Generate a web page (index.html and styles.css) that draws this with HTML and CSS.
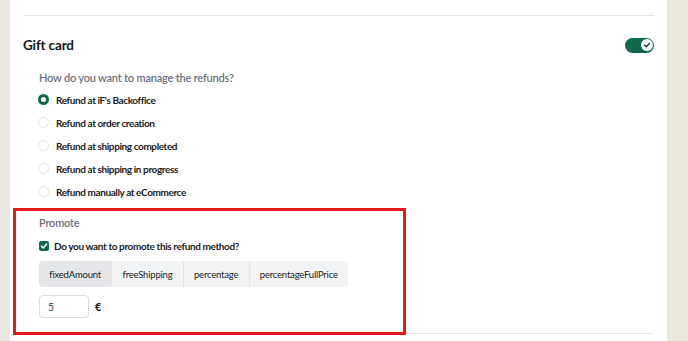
FILE: index.html
```html
<!DOCTYPE html>
<html lang="en">
<head>
<meta charset="utf-8">
<title>Gift card</title>
<link rel="stylesheet" href="styles.css">
</head>
<body>
<div class="page">
  <div class="gutter"></div>
  <main class="panel">
    <div class="divider"></div>
    <div class="card-header">
      <h2 class="card-title">Gift card</h2>
      <span class="toggle"><span class="knob"><svg viewBox="0 0 12 12" width="12" height="12"><path d="M3.6 6.2l1.6 1.6 3.2-3.4" fill="none" stroke="#1b3a2c" stroke-width="1.4" stroke-linecap="round" stroke-linejoin="round"/></svg></span></span>
    </div>
    <div class="section">
      <div class="question">How do you want to manage the refunds?</div>
      <div class="radio-list">
        <label class="radio-row"><span class="radio checked"></span>Refund at iF's Backoffice</label>
        <label class="radio-row"><span class="radio"></span>Refund at order creation</label>
        <label class="radio-row"><span class="radio"></span>Refund at shipping completed</label>
        <label class="radio-row"><span class="radio"></span>Refund at shipping in progress</label>
        <label class="radio-row"><span class="radio"></span>Refund manually at eCommerce</label>
      </div>
    </div>
    <div class="promote">
      <div class="question">Promote</div>
      <label class="check-row"><span class="checkbox"><svg viewBox="0 0 10 10" width="10" height="10"><path d="M2.4 5.2l1.8 1.7 3.5-3.8" fill="none" stroke="#fff" stroke-width="1.5" stroke-linecap="round" stroke-linejoin="round"/></svg></span>Do you want to promote this refund method?</label>
      <div class="segmented">
        <button class="seg active">fixedAmount</button>
        <button class="seg">freeShipping</button>
        <button class="seg">percentage</button>
        <button class="seg">percentageFullPrice</button>
      </div>
      <div class="amount-row">
        <input class="amount" type="text" value="5">
        <span class="currency">€</span>
      </div>
    </div>
    <div class="divider bottom"></div>
  </main>
  <div class="gutter-right"></div>
</div>
</body>
</html>
```
FILE: styles.css
```css
html, body {
  margin: 0;
  padding: 0;
  background: #ebe8e2;
  font-family: "Lato", "Open Sans", sans-serif;
  color: #1c1c1c;
}
.page {
  display: flex;
  height: 341px;
  overflow: hidden;
}
.gutter { width: 10px; flex: none; }
.gutter-right { flex: 1; }
.panel {
  width: 657px;
  flex: none;
  background: #fff;
  padding: 0 13px;
  box-sizing: border-box;
}
.divider {
  margin-top: 15px;
  border-top: 1px solid #e6e6e6;
}
.divider.bottom { margin-top: -2px; }
.card-header {
  display: flex;
  justify-content: space-between;
  align-items: center;
  margin-top: 17px;
  height: 24px;
}
.card-title {
  margin: 0;
  font-size: 13.5px;
  font-weight: 700;
  letter-spacing: -0.15px;
  color: #161616;
  line-height: 24px;
}
.toggle {
  width: 29px;
  height: 15px;
  border-radius: 8px;
  background: #0f6b47;
  display: flex;
  justify-content: flex-end;
  align-items: center;
  padding: 0 1.5px;
  box-sizing: border-box;
}
.knob {
  width: 12px;
  height: 12px;
  border-radius: 50%;
  background: #fff;
  display: flex;
}
.section {
  padding-left: 16px;
  margin-top: 11px;
}
.question {
  font-size: 11px;
  line-height: 20px;
  letter-spacing: -0.2px;
  color: #6b7280;
  font-weight: 600;
}
.radio-list { display: flex; flex-direction: column; }
.radio-row {
  display: flex;
  align-items: center;
  height: 23px;
  font-size: 10px;
  letter-spacing: -0.4px;
  font-weight: 700;
  color: #1c1c1c;
}
.radio {
  width: 11px;
  height: 11px;
  border-radius: 50%;
  border: 1px solid #e2e2e2;
  box-sizing: border-box;
  margin-right: 7px;
  margin-left: -1px;
}
.radio.checked {
  border: 3.5px solid #0f6b47;
}
.promote {
  position: relative;
  z-index: 1;
  margin-top: 5px;
  margin-left: -10px;
  width: 393px;
  height: 127px;
  box-sizing: border-box;
  border: 3px solid #e8161d;
  padding: 2px 0 0 23px;
}
.check-row {
  display: flex;
  align-items: center;
  height: 20px;
  margin-top: 3px;
  font-size: 10px;
  letter-spacing: -0.38px;
  font-weight: 700;
}
.checkbox {
  width: 10px;
  height: 10px;
  border-radius: 2px;
  background: #0f6b47;
  margin-right: 5px;
  display: flex;
}
.segmented {
  display: inline-flex;
  margin-top: 5px;
  height: 26px;
  background: #f3f4f6;
  border-radius: 4px;
  overflow: hidden;
}
.seg {
  border: 0;
  border-left: 1px solid #e3e4e7;
  background: #f3f4f6;
  font-family: inherit;
  font-size: 9.5px;
  letter-spacing: -0.2px;
  color: #222;
  padding: 0 10.25px;
  height: 26px;
}
.seg:first-child { border-left: 0; }
.seg.active { background: #e5e6ea; }
.amount-row {
  display: flex;
  align-items: center;
  margin-top: 8px;
}
.amount {
  width: 50px;
  height: 23px;
  box-sizing: border-box;
  border: 1px solid #dcdcdc;
  border-radius: 4px;
  padding: 0 8px;
  font-family: inherit;
  font-size: 10.5px;
  color: #3a4a6a;
  outline: none;
}
.currency {
  margin-left: 6px;
  font-size: 11px;
  font-weight: 700;
}
```
